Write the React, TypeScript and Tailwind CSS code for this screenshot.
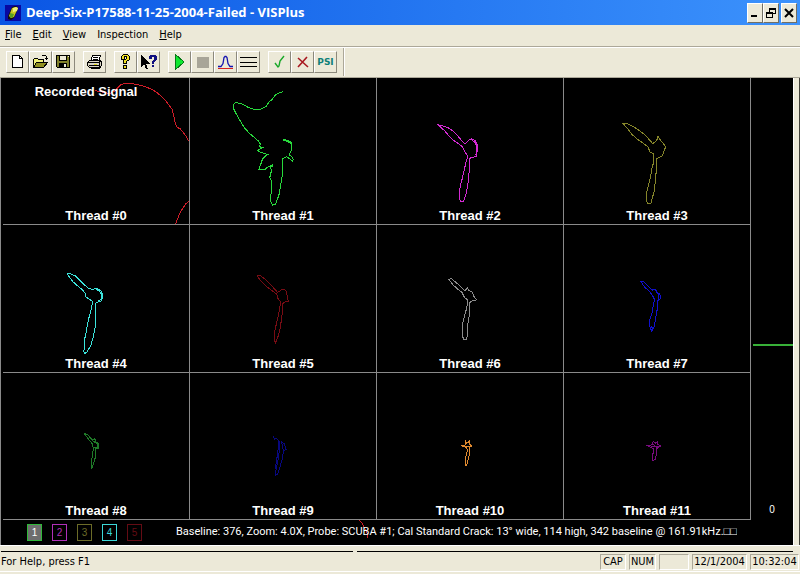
import type { ReactNode } from "react";

type Trace = {
  label: string;
  color: string;
  box: string;
  d: string;
};

// Trace coordinates are in thirds of a pixel, each with its own origin
const traces: Trace[] = [
  {
    label: "Thread #0",
    color: "#d01c28",
    box: "9 6 558 438",
    d: "M286 44L300 46L316 50L330 52L345 44L352 36L362 26L375 22L392 22L410 25L430 30L450 37L468 47L484 60L497 74L509 90L517 100L521 118L526 142L532 154L541 158L549 168L557 178L563 190L570 196M570 374L558 382L548 397L540 410L533 428L524 449",
  },
  {
    label: "Thread #1",
    color: "#28d83c",
    box: "570 6 558 438",
    d: "M849 46L838 50L826 57L818 68L808 77L797 92L783 99L765 100L745 94L728 84L708 79L701 84L700 96L706 108L715 124L725 142L736 158L750 173L764 185L775 194L781 204L779 212L788 214L772 222L780 228L803 235L794 241L787 250L782 265L777 279L795 280L803 273L818 265L819 272L812 270L814 285L809 305L814 312L814 345L811 375L818 387L827 384L832 370L838 352L843 320L848 290L848 248L860 242L872 250L878 255L880 249L874 240L868 236L874 222L874 200L866 193L848 190M850 193L864 196L872 203",
  },
  {
    label: "Thread #2",
    color: "#d42ad4",
    box: "3 6 558 438",
    d: "M186 146L197 148L215 154L232 165L246 180L260 197L268 203L275 195L285 188L297 193L303 205L305 222L301 232L300 242L288 243L280 248L281 275L278 300L275 330L270 355L262 377L254 376L250 366L250 350L253 330L258 310L264 285L269 262L273 248L273 236L266 226L260 212L248 203L232 192L218 178L205 163ZM285 190L296 197L301 208L303 222L299 236",
  },
  {
    label: "Thread #3",
    color: "#85852a",
    box: "564 6 558 438",
    d: "M741 142L752 142L770 150L788 162L803 173L815 185L830 202L838 197L843 190L846 181L852 190L860 200L869 212L864 225L860 238L850 243L842 248L842 275L838 310L836 340L830 362L824 383L816 383L811 372L812 350L818 325L824 300L827 278L832 262L833 232L822 228L816 212L800 200L783 188L768 175L755 158Z",
  },
  {
    label: "Thread #4",
    color: "#3ce4dc",
    box: "9 6 558 438",
    d: "M201 150L212 152L226 158L240 172L252 184L266 196L278 199L288 196L300 200L307 210L308 222L303 234L292 237L286 242L286 280L286 310L280 340L272 368L262 385L255 391L250 384L254 375L253 352L258 330L263 300L269 275L275 255L277 235L268 228L258 222L256 210L245 198L230 186L218 175L207 160ZM288 199L298 203L305 214L304 228L294 234",
  },
  {
    label: "Thread #5",
    color: "#780c14",
    box: "570 6 558 438",
    d: "M772 158L782 158L795 168L812 184L832 207L840 203L849 197L858 203L861 215L862 226L866 234L855 236L847 242L848 262L844 290L841 315L834 340L826 360L823 350L825 320L832 290L838 262L842 236L834 226L830 213L815 202L797 188L782 173Z",
  },
  {
    label: "Thread #6",
    color: "#8c8c8c",
    box: "3 6 558 438",
    d: "M218 168L227 167L240 178L254 190L267 203L274 194L278 202L288 206L294 220L302 230L290 232L282 238L281 270L276 300L275 330L272 348L263 348L259 338L260 300L268 270L273 250L276 232L265 222L258 208L245 198L230 184Z",
  },
  {
    label: "Thread #7",
    color: "#1010d0",
    box: "564 6 558 438",
    d: "M795 176L803 176L815 187L828 201L838 198L842 206L852 214L853 226L848 232L843 232L843 262L838 290L834 312L827 324L822 312L820 295L828 270L832 245L836 230L830 218L820 204L806 192ZM840 204L849 216L846 230M824 308L830 316",
  },
  {
    label: "Thread #8",
    color: "#1f7a28",
    box: "9 9 558 438",
    d: "M253 190L262 193L278 210L284 206L288 215L296 222L295 234L286 236L287 258L281 280L275 296L275 270L280 236L278 222L266 208ZM280 212L291 222L291 232L280 232",
  },
  {
    label: "Thread #9",
    color: "#080880",
    box: "570 9 558 438",
    d: "M820 198L824 208L828 204L837 213L838 240L834 270L828 300L827 316L834 310L840 290L848 262L850 240L844 214L852 220L859 238L850 242M834 214L834 240L830 270L826 296",
  },
  {
    label: "Thread #10",
    color: "#e08a30",
    box: "3 9 558 438",
    d: "M267 211L272 220L281 212L280 222L288 228L280 232L281 250L276 270L272 287L268 286L269 262L274 240L272 232L258 227L270 224ZM264 228L286 228",
  },
  {
    label: "Thread #11",
    color: "#7a0c80",
    box: "564 9 558 438",
    d: "M814 226L828 224L832 214L838 219L846 214L845 223L855 228L843 234L842 250L838 268L831 271L829 260L834 236L822 230ZM826 228H850M830 220L846 236",
  },
];

const menus = ["File", "Edit", "View", "Inspection", "Help"];

const channels = [
  { id: 1, style: "border-[#30b838] bg-[#6e6e6e] text-white" },
  { id: 2, style: "border-[#b030b8] text-[#b030b8]" },
  { id: 3, style: "border-[#6c6c28] text-[#6c6c28]" },
  { id: 4, style: "border-[#3cd8d8] text-[#3cd8d8]" },
  { id: 5, style: "border-[#640c14] text-[#640c14]" },
];

const gaugeLevel = 57;

function Icon({ children }: { children: ReactNode }) {
  return (
    <svg
      viewBox="0 0 17 16"
      className="h-4 w-[17px] shrink-0"
      fill="none"
      stroke="#000"
      shapeRendering="crispEdges"
      aria-hidden="true"
    >
      {children}
    </svg>
  );
}

const toolGroups: { name: string; icon: ReactNode }[][] = [
  [
    {
      name: "New",
      icon: (
        <Icon>
          <path d="M3.5 1.5h7l3 3v9h-10z" fill="#fff" />
          <path d="M10.5 1.5v3h3" />
        </Icon>
      ),
    },
    {
      name: "Open",
      icon: (
        <Icon>
          <path d="M1.5 13.5v-8l1-1h3l1 1h5v3" fill="#f0f078" />
          <path d="M1.5 13.5l3-5h11l-4 5z" fill="#909020" />
          <path d="M9.5 2.5l1-1h3l1 1v2M12.5 4.5h3M14.5 2.5v3" />
        </Icon>
      ),
    },
    {
      name: "Save",
      icon: (
        <Icon>
          <path d="M1.5 1.5h13v12h-12l-1-1z" fill="#80802a" />
          <path d="M4.5 1.5h7v5h-7z" fill="#ece9d8" />
          <path d="M4 9h8v4H4z" fill="#000" stroke="none" />
          <path d="M9 10h2v3H9zM13 2h1v1h-1z" fill="#ece9d8" stroke="none" />
        </Icon>
      ),
    },
  ],
  [
    {
      name: "Print",
      icon: (
        <Icon>
          <path d="M4.5 7.5l2-6h8l-2 6z" fill="#fff" />
          <path d="M7 3.5h5M6.5 5.5h5" />
          <path d="M1.5 8.5l2-2h11l1 1v4l-2 2h-10l-2-2z" fill="#d8d4c4" />
          <path d="M2 8.5h11l2-2M13.5 8.5v5M3 11.5h10" />
          <path d="M8 10h3v1H8z" fill="#e0d820" stroke="none" />
          <path d="M4.5 13.5l1 1h8l1-1" />
        </Icon>
      ),
    },
  ],
  [
    {
      name: "About",
      icon: (
        <Icon>
          <path d="M4.5 5.5v-3l2-2h4l2 2v3l-3 2v2h-3v-3l3-2v-2h-2v3z" fill="#f0e020" />
          <path d="M6.5 11.5h3v3h-3z" fill="#f0e020" />
        </Icon>
      ),
    },
    {
      name: "Context help",
      icon: (
        <Icon>
          <path d="M1 1v12l3-3 2 5h2l-2-5h4z" fill="#000" stroke="none" />
          <path
            d="M9 5V2l2-1h4l2 2v3l-3 2v2h-2V7l2-1V3h-2v2zM12 11h2v2h-2z"
            fill="#101080"
            stroke="none"
          />
        </Icon>
      ),
    },
  ],
  [
    {
      name: "Run",
      icon: (
        <Icon>
          <path d="M4.5.5v15l8-7v-1z" fill="#10e830" stroke="#087818" />
        </Icon>
      ),
    },
    {
      name: "Stop",
      icon: (
        <Icon>
          <path d="M3 3h12v11H3z" fill="#a8a598" stroke="none" />
        </Icon>
      ),
    },
    {
      name: "Signal",
      icon: (
        <Icon>
          <path
            d="M1 12.5h3l2-3 1-6 1-1h1l1 1 1 6 2 3h3"
            stroke="#1414b0"
            strokeWidth="1.3"
            shapeRendering="auto"
          />
          <path d="M1 14.5h15" stroke="#d82020" />
        </Icon>
      ),
    },
    {
      name: "Threads",
      icon: (
        <Icon>
          <path d="M0 3.5h17M0 8.5h17M0 12.5h17" />
        </Icon>
      ),
    },
  ],
  [
    {
      name: "Accept",
      icon: (
        <Icon>
          <path
            d="M4 9l3 4 1-1 1-5 4-5"
            stroke="#18a828"
            strokeWidth="1.4"
            shapeRendering="auto"
          />
        </Icon>
      ),
    },
    {
      name: "Reject",
      icon: (
        <Icon>
          <path
            d="M4 4l10 9M13 3L4 13"
            stroke="#a81820"
            strokeWidth="1.6"
            shapeRendering="auto"
          />
        </Icon>
      ),
    },
    {
      name: "PSI",
      icon: (
        <span className="font-['DejaVu_Sans',sans-serif] text-[9px] leading-none font-bold text-[#108078]">
          PSI
        </span>
      ),
    },
  ],
];

function TitleBar() {
  const button =
    "flex h-5 w-4 items-center justify-center border border-t-white border-l-white border-r-[#716f64] border-b-[#716f64] bg-[#ece9d8]";

  return (
    <header className="flex h-[25px] shrink-0 items-center bg-linear-to-r from-[#0a55e4] to-[#3c92fc] pr-[3px] pl-[5px]">
      <svg viewBox="0 0 16 16" className="h-4 w-4 shrink-0" aria-hidden="true">
        <path d="M0 0h16v16H0z" fill="#0808a0" />
        <path d="M7 2l3-1 3 1v2l-4 9-3 2-3-1v-3z" fill="#101010" />
        <path d="M7 3l4-1 2 1-4 9-3 1-2-2z" fill="#c8c820" />
        <path d="M8 3l3-1 2 1-1 3-4 1z" fill="#f0f080" />
        <path d="M5 8l4 1-1 3-3 1z" fill="#58a020" />
      </svg>
      <h1 className="ml-[5px] flex-1 truncate font-['Open_Sans','Noto_Sans',sans-serif] text-[13px] font-bold text-white">
        Deep-Six-P17588-11-25-2004-Failed - VISPlus
      </h1>
      <div className="flex">
        <button type="button" aria-label="Minimize" className={button}>
          <svg viewBox="0 0 10 10" className="h-2.5 w-2.5 shrink-0">
            <path d="M1 7h6v2H1z" />
          </svg>
        </button>
        <button type="button" aria-label="Restore" className={button}>
          <svg
            viewBox="0 0 10 10"
            className="h-2.5 w-2.5 shrink-0"
            fill="none"
            stroke="#000"
            shapeRendering="crispEdges"
          >
            <path d="M3.5 4V.5h6v5H7M3 1.5h7M.5 4.5h6v5h-6zM0 5.5h7" />
          </svg>
        </button>
        <button type="button" aria-label="Close" className={`ml-[2px] ${button}`}>
          <svg viewBox="0 0 10 10" className="h-2.5 w-2.5 shrink-0" stroke="#000" strokeWidth="2">
            <path d="M1 1l8 8M9 1L1 9" />
          </svg>
        </button>
      </div>
    </header>
  );
}

function Toolbar() {
  return (
    <div
      role="toolbar"
      aria-label="Standard"
      className="flex h-8 shrink-0 items-center border-t border-[#aca899] border-b border-b-[#aca899] pl-1.5 shadow-[inset_0_1px_0_#fff]"
    >
      <div className="flex gap-2">
        {toolGroups.map((group, i) => (
          <div key={i} className="flex">
            {group.map((tool) => (
              <button
                key={tool.name}
                type="button"
                aria-label={tool.name}
                className="flex h-[22px] w-[23px] items-center justify-center border border-t-white border-l-white border-r-[#8c897c] border-b-[#8c897c]"
              >
                {tool.icon}
              </button>
            ))}
          </div>
        ))}
      </div>
      <div className="ml-1.5 h-7 w-[2px] border-l border-[#aca899] bg-white" />
    </div>
  );
}

function ThreadCell({ trace, first }: { trace: Trace; first: boolean }) {
  return (
    <div className="relative flex flex-col items-center justify-between overflow-hidden border-r border-b border-[#8a8a8a]">
      <svg
        viewBox={trace.box}
        className="absolute inset-0 h-full w-full"
        fill="none"
        stroke={trace.color}
        strokeWidth="3"
        shapeRendering="crispEdges"
        aria-hidden="true"
      >
        <path d={trace.d} />
      </svg>
      <span className="relative pt-1.5 pr-5 text-[13px] leading-4 font-bold">
        {first && "Recorded Signal"}
      </span>
      <span className="relative text-[13px] leading-4 font-bold">{trace.label}</span>
    </div>
  );
}

function StatusPanel({ children, width }: { children?: ReactNode; width: string }) {
  return (
    <span
      className={`flex h-4 items-center justify-center border border-t-[#aca899] border-l-[#aca899] border-r-white border-b-white ${width}`}
    >
      {children}
    </span>
  );
}

export default function App() {
  return (
    <div className="flex h-screen flex-col overflow-hidden bg-[#ece9d8] font-['DejaVu_Sans_Condensed','DejaVu_Sans',sans-serif] text-[11px] text-black">
      <TitleBar />

      <nav className="flex h-[21px] shrink-0 items-center gap-[11px] pl-[5px]">
        {menus.map((menu) => (
          <button key={menu} type="button">
            {menu === "Inspection" ? (
              menu
            ) : (
              <>
                <span className="underline">{menu[0]}</span>
                {menu.slice(1)}
              </>
            )}
          </button>
        ))}
      </nav>

      <Toolbar />

      {/* Signal view */}
      <main className="flex min-h-0 flex-1 flex-col border-r border-l border-r-[#404038] border-l-[#8a8a8a] pr-[5px] font-['Liberation_Sans',Arial,sans-serif] text-white">
        <div className="relative flex min-h-0 flex-1 flex-col border-r border-white bg-black">
          <div className="flex min-h-0 flex-1">
            <div className="grid flex-1 grid-cols-4 grid-rows-3 border-l-2 border-black">
              {traces.map((trace, i) => (
                <ThreadCell key={trace.label} trace={trace} first={i === 0} />
              ))}
            </div>
            <div className="flex w-[42px] flex-col items-center justify-end">
              <span className="pb-1 text-[10px] leading-3">0</span>
            </div>
          </div>

          <div className="relative flex h-[25px] items-center pl-[26px]">
            <svg
              viewBox="0 0 10 25"
              className="absolute top-0 left-[357px] h-full w-2.5"
              fill="none"
              stroke="#d01c28"
              shapeRendering="crispEdges"
              aria-hidden="true"
            >
              <path d="M1 0l3 3 2 4 3 6 1 5 1 8" />
            </svg>
            <div className="flex gap-2.5">
              {channels.map((channel) => (
                <button
                  key={channel.id}
                  type="button"
                  aria-label={`Channel ${channel.id}`}
                  className={`flex h-[17px] w-[15px] items-center justify-center border text-[10px] ${channel.style}`}
                >
                  {channel.id}
                </button>
              ))}
            </div>
            <p className="relative ml-[34px] truncate font-['Roboto','Liberation_Sans',sans-serif] text-[11px]">
              Baseline: 376, Zoom: 4.0X, Probe: SCUBA #1; Cal Standard Crack: 13° wide, 114 high,
              342 baseline @ 161.91kHz.□□
            </p>
          </div>

          {/* Level gauge */}
          <div
            className="absolute right-0 h-0.5 w-10 bg-[#38b038]"
            style={{ top: `${gaugeLevel}%` }}
          />
        </div>
      </main>

      {/* Splitter */}
      <div className="flex h-[7px] shrink-0 items-end gap-1 border-t border-white pr-[7px] pl-px">
        <div className="h-px w-[352px] bg-black" />
        <div className="h-px flex-1 bg-black" />
      </div>

      <footer className="flex h-5 shrink-0 items-start gap-[3px] border-b border-white pt-[2px] pr-px pl-px">
        <span className="flex h-4 flex-1 items-center">For Help, press F1</span>
        <StatusPanel width="w-[26px]">CAP</StatusPanel>
        <StatusPanel width="w-[27px]">NUM</StatusPanel>
        <StatusPanel width="w-[30px]" />
        <StatusPanel width="w-[55px]">12/1/2004</StatusPanel>
        <StatusPanel width="w-[49px]">10:32:04</StatusPanel>
      </footer>
      <div className="h-[2px] shrink-0" />
    </div>
  );
}
